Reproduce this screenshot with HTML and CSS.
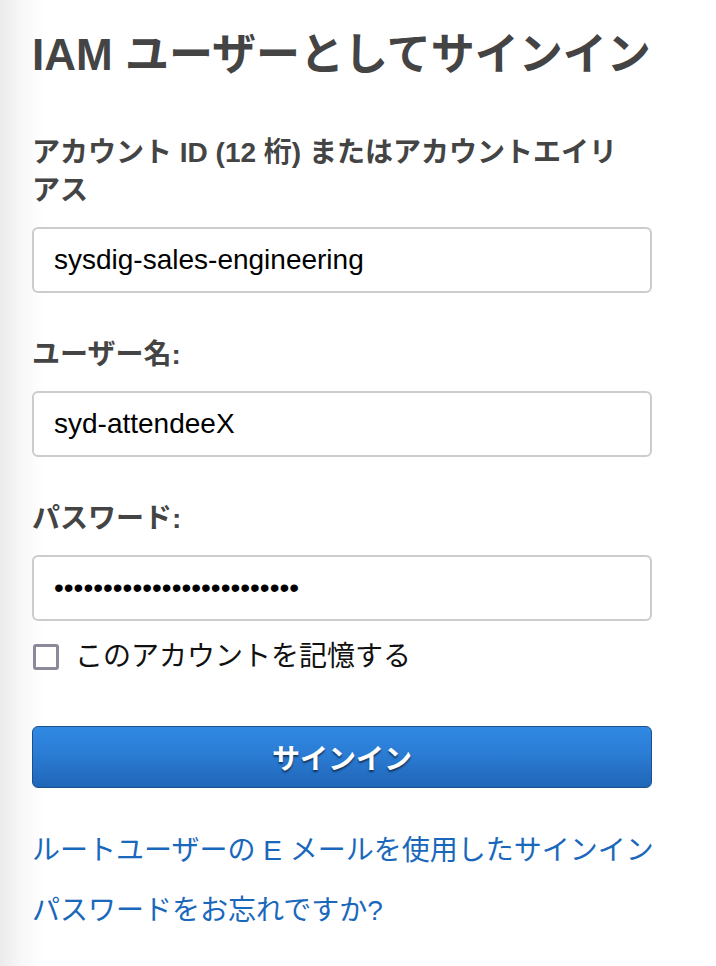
FILE: index.html
```html
<!DOCTYPE html>
<html lang="ja">
<head>
<meta charset="utf-8">
<title>IAM ユーザーとしてサインイン</title>
<link rel="stylesheet" href="styles.css">
</head>
<body>
<main class="signin">
  <h1 class="title">IAM ユーザーとしてサインイン</h1>
  <form class="form">
    <label class="label narrow" for="account">アカウント ID (12 桁) またはアカウントエイリアス</label>
    <input class="field" id="account" type="text" value="sysdig-sales-engineering">

    <label class="label spaced" for="user">ユーザー名:</label>
    <input class="field" id="user" type="text" value="syd-attendeeX">

    <label class="label spaced" for="pass">パスワード:</label>
    <input class="field" id="pass" type="password" value="abcdefghijklmnopqrstuvwxy">

    <label class="remember">
      <input class="check" type="checkbox">
      <span>このアカウントを記憶する</span>
    </label>

    <button class="submit" type="button">サインイン</button>

    <a class="link first" href="#">ルートユーザーの E メールを使用したサインイン</a>
    <a class="link" href="#">パスワードをお忘れですか?</a>
  </form>
</main>
</body>
</html>
```

FILE: styles.css
```css
html, body {
  margin: 0;
  padding: 0;
}

body {
  width: 716px;
  height: 966px;
  background: linear-gradient(to right, #ebebeb 0, #f8f8f8 22px, #ffffff 44px);
  font-family: "Liberation Sans", "Noto Sans CJK JP", sans-serif;
  color: #444444;
  overflow: hidden;
}

.signin {
  width: 620px;
  padding: 29px 0 0 32px;
}

.title {
  margin: 0;
  font-size: 44px;
  line-height: 52px;
  font-weight: bold;
  color: #444444;
  white-space: nowrap;
}

.form {
  display: flex;
  flex-direction: column;
  align-items: stretch;
  margin-top: 53px;
}

.label {
  font-size: 28px;
  line-height: 38px;
  font-weight: bold;
  color: #444444;
  margin-bottom: 17px;
}

.label.narrow {
  width: 600px;
}

.label.spaced {
  margin-top: 43px;
}

.field {
  box-sizing: border-box;
  height: 66px;
  width: 620px;
  margin: 0;
  padding: 0 20px;
  border: 2px solid #cccccc;
  border-radius: 6px;
  background: #ffffff;
  font-family: "Liberation Sans", "Noto Sans CJK JP", sans-serif;
  font-size: 28px;
  color: #000000;
  outline: none;
}

.remember {
  display: flex;
  align-items: center;
  gap: 16px;
  margin-top: 17px;
  height: 38px;
  font-size: 28px;
  line-height: 38px;
  color: #111111;
}

.check {
  appearance: none;
  -webkit-appearance: none;
  box-sizing: border-box;
  width: 26px;
  height: 26px;
  margin: 0 0 0 1px;
  border: 3px solid #8a8a98;
  border-radius: 3px;
  background: #ffffff;
}

.submit {
  box-sizing: border-box;
  margin-top: 50px;
  height: 62px;
  width: 620px;
  border: 1px solid #1b4f8e;
  border-radius: 6px;
  background: linear-gradient(to bottom, #3189e3 0%, #2a7ad2 50%, #1f66b7 100%);
  color: #ffffff;
  font-family: "Liberation Sans", "Noto Sans CJK JP", sans-serif;
  font-size: 28px;
  font-weight: bold;
  text-shadow: 0 2px 2px rgba(0, 0, 0, 0.55);
  cursor: pointer;
}

.link {
  font-size: 28px;
  line-height: 38px;
  color: #1a68bb;
  text-decoration: none;
  margin-top: 22px;
  white-space: nowrap;
}

.link.first {
  margin-top: 44px;
}
```
